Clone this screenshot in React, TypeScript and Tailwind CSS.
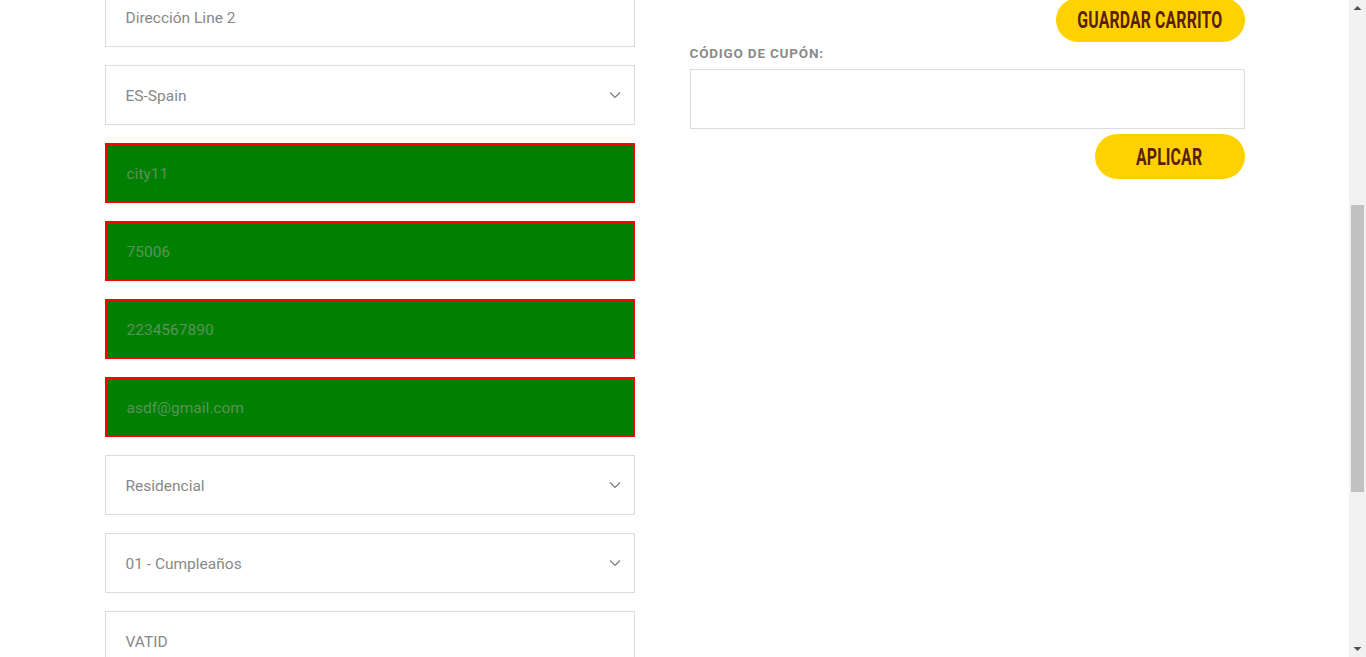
import React from "react";

const Chevron = () => (
  <svg width="12" height="8" viewBox="0 0 12 8" className="absolute right-[13px] top-1/2 -translate-y-1/2">
    <path d="M1 1.5 L6 6.5 L11 1.5" fill="none" stroke="#777" strokeWidth="1.1" />
  </svg>
);

const Field = ({ text, select = false, green = false }: { text: string; select?: boolean; green?: boolean }) => (
  <div
    className={
      green
        ? "relative h-[60px] mb-[18px] border-2 border-[#ff0000] bg-[#008000] flex items-center pl-[20px] pt-[4px] text-[15.5px] text-[#5d925d]"
        : "relative h-[60px] mb-[18px] border border-[#dcdcdc] bg-white flex items-center pl-[20px] pt-[4px] text-[15.5px] text-[#888888]"
    }
  >
    <span>{text}</span>
    {select && <Chevron />}
  </div>
);

export default function App() {
  return (
    <div className="flex h-[657px] w-[1366px] overflow-hidden bg-white" style={{ fontFamily: '"Roboto", "Liberation Sans", sans-serif' }}>
      <div className="flex-1 overflow-hidden">
        <div className="w-[1140px] mx-auto flex justify-between -mt-[13px]">
          <div className="w-[530px] flex flex-col">
            <Field text="Dirección Line 2" />
            <Field text="ES-Spain" select />
            <Field text="city11" green />
            <Field text="75006" green />
            <Field text="2234567890" green />
            <Field text="asdf@gmail.com" green />
            <Field text="Residencial" select />
            <Field text="01 - Cumpleaños" select />
            <Field text="VATID" />
          </div>
          <div className="w-[555px] flex flex-col items-end">
            <button className="mt-[11px] w-[189px] h-[44px] rounded-full bg-[#ffd100] text-[#5a1e0f] flex items-center justify-center">
              <span className="inline-block text-[24px] font-bold tracking-[0.2px] scale-x-[0.66] whitespace-nowrap leading-none">GUARDAR CARRITO</span>
            </button>
            <div className="self-stretch mt-[4px] text-[13.5px] font-bold text-[#8a8a8a] tracking-[0.8px] leading-[15px]">CÓDIGO DE CUPÓN:</div>
            <div className="self-stretch mt-[8px] h-[60px] border border-[#dcdcdc]" />
            <button className="mt-[5px] w-[150px] h-[45px] rounded-full bg-[#ffd100] text-[#5a1e0f] flex items-center justify-center">
              <span className="inline-block text-[24px] font-bold tracking-[0.2px] scale-x-[0.66] whitespace-nowrap leading-none">APLICAR</span>
            </button>
          </div>
        </div>
      </div>
      <div className="w-[17px] h-full bg-[#f1f1f1] flex flex-col items-center">
        <svg width="9" height="6" viewBox="0 0 9 6" className="mt-[5px]">
          <path d="M0.5 5 L4.5 1 L8.5 5 Z" fill="#505050" />
        </svg>
        <div className="mt-[194px] w-[13px] h-[287px] bg-[#c1c1c1]" />
        <div className="flex-1" />
        <svg width="9" height="6" viewBox="0 0 9 6" className="mb-[5px]">
          <path d="M0.5 1 L4.5 5 L8.5 1 Z" fill="#505050" />
        </svg>
      </div>
    </div>
  );
}
